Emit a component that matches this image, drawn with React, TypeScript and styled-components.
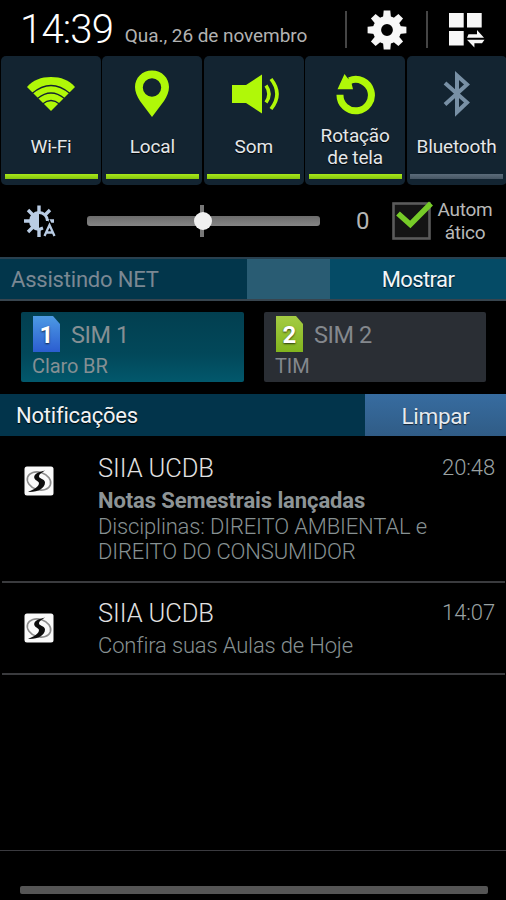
import React from "react";
import styled, { createGlobalStyle } from "styled-components";

const GlobalStyle = createGlobalStyle`
  *, *::before, *::after { box-sizing: border-box; }
  html, body { margin: 0; padding: 0; background: #000; }
  body { font-family: Roboto, "Liberation Sans", sans-serif; }
  svg { display: block; flex: none; }
`;

const LIME = "#b0f808";

const Screen = styled.main`
  width: 506px;
  height: 900px;
  overflow: hidden;
  background: #000;
  display: flex;
  flex-direction: column;
`;

const Header = styled.header`
  height: 56px;
  flex: none;
  display: flex;
  align-items: flex-start;
  padding-left: 20px;
`;

const Clock = styled.time`
  width: 105px;
  font-size: 40px;
  font-weight: 300;
  line-height: 60px;
  letter-spacing: -0.8px;
  color: #fff;
  white-space: nowrap;
`;

const DateText = styled.span`
  width: 221px;
  padding-top: 5px;
  font-size: 19px;
  line-height: 61px;
  letter-spacing: -0.06px;
  color: #b2b2b2;
  white-space: nowrap;
`;

const HeaderDivider = styled.i`
  width: 2px;
  height: 37px;
  margin: 11px 0 0 0;
  background: #454545;
`;

const HeaderButton = styled.button<{ $width: number; $top: number }>`
  width: ${(p) => p.$width}px;
  padding: ${(p) => p.$top}px 0 0;
  border: 0;
  background: none;
  display: flex;
  justify-content: center;
`;

const Tiles = styled.nav`
  height: 129px;
  flex: none;
  padding-left: 1px;
  display: grid;
  grid-template-columns: repeat(5, 100px);
  column-gap: 1.4px;
`;

const Tile = styled.button`
  min-width: 0;
  padding: 0 0 5px;
  border: 0;
  border-radius: 5px;
  background: #132431;
  font-family: inherit;
  display: flex;
  flex-direction: column;
  align-items: center;
`;

const TileIcon = styled.span`
  height: 69px;
  padding-top: 6px;
  flex: none;
  display: flex;
  align-items: center;
`;

const TileLabel = styled.span`
  height: 44px;
  flex: none;
  margin-bottom: 5px;
  display: flex;
  align-items: center;
  text-align: center;
  white-space: pre;
  font-size: 19px;
  line-height: 22px;
  letter-spacing: -0.15px;
  color: #e4e7ea;
  text-shadow: 0 1px 1px #000;
`;

const TileIndicator = styled.i<{ $on: boolean }>`
  width: 93px;
  height: 5px;
  flex: none;
  background: ${(p) => (p.$on ? "linear-gradient(#a8e818, #86c410)" : "linear-gradient(#5c6c7a, #465563)")};
`;

const Brightness = styled.section`
  height: 72px;
  flex: none;
  display: flex;
  align-items: center;
  padding-left: 23px;
`;

const Slider = styled.div`
  width: 233px;
  height: 32px;
  margin-left: 31px;
  display: grid;
  place-items: center;

  > * { grid-area: 1 / 1; }
`;

const Track = styled.i`
  width: 100%;
  height: 10px;
  border-radius: 3px;
  background: linear-gradient(#6c6c6c, #858585);
`;

const CenterTick = styled.i`
  width: 4px;
  height: 32px;
  margin-right: 3px;
  background: #777;
`;

const Knob = styled.i`
  width: 18px;
  height: 18px;
  margin-right: 1px;
  border-radius: 50%;
  background: #f0f0f0;
`;

const Level = styled.span`
  width: 72px;
  padding-left: 36px;
  font-size: 24px;
  line-height: 28px;
  color: #b5b5b5;
`;

const CheckLabel = styled.span`
  margin-left: 1px;
  padding-top: 1px;
  width: 60px;
  text-align: center;
  font-size: 19px;
  line-height: 22.5px;
  letter-spacing: -0.3px;
  color: #b8b8b8;
`;

const PlayBar = styled.section`
  height: 44px;
  flex: none;
  border-top: 2px solid #29404f;
  border-bottom: 2px solid #38454f;
  display: grid;
  grid-template-columns: 247px 83px 1fr;
  grid-template-rows: 40px;
`;

const PlayTitle = styled.span`
  padding-left: 11px;
  background: #02364b;
  font-size: 22px;
  line-height: 42px;
  letter-spacing: -0.2px;
  color: #7b8893;
`;

const PlayProgress = styled.span`
  background: #295c73;
`;

const ShowButton = styled.button`
  padding: 2px 0 0;
  border: 0;
  background: #054b66;
  font-family: inherit;
  font-size: 22px;
  line-height: 38px;
  letter-spacing: -0.6px;
  color: #f2f6f8;
  text-shadow: 0 1px 1px #012;
`;

const Sims = styled.section`
  height: 93px;
  flex: none;
  padding: 11px 21px 12px;
  display: grid;
  grid-template-columns: 223px 222px;
  column-gap: 20px;
`;

const SimCard = styled.button<{ $active: boolean }>`
  padding: 4px 0 0 12px;
  border: 0;
  border-radius: 2px;
  background: ${(p) => (p.$active ? "linear-gradient(#023f50, #02485a 60%, #02586c)" : "#2a2e34")};
  color: ${(p) => (p.$active ? "#858f93" : "#84888d")};
  font-family: inherit;
  text-align: left;
  display: flex;
  flex-direction: column;
`;

const SimTop = styled.span`
  height: 36px;
  display: flex;
  align-items: flex-start;
  gap: 11px;
`;

const SimName = styled.span`
  font-size: 23.5px;
  line-height: 38px;
  letter-spacing: -0.4px;
`;

const SimOperator = styled.span`
  margin-left: -1px;
  font-size: 20px;
  line-height: 29px;
  letter-spacing: -0.1px;
`;

const NotificationBar = styled.section`
  height: 42px;
  flex: none;
  display: grid;
  grid-template-columns: 365px 1fr;
  grid-template-rows: 42px;
`;

const BarTitle = styled.h1`
  margin: 0;
  padding-left: 16px;
  background: #02344b;
  font-size: 22px;
  font-weight: 400;
  line-height: 44px;
  letter-spacing: -0.2px;
  color: #f0f3f5;
  text-shadow: 0 1px 1px #000;
`;

const ClearButton = styled.button`
  padding: 3px 0 0;
  border: 0;
  background: linear-gradient(#376ca0, #305c86);
  font-family: inherit;
  font-size: 22.5px;
  line-height: 39px;
  letter-spacing: -0.3px;
  color: #e6ebf0;
  text-shadow: 0 1px 1px #123;
`;

const Notification = styled.article<{ $height: number; $top: number }>`
  height: ${(p) => p.$height}px;
  flex: none;
  margin: 0 1px 0 2px;
  padding: ${(p) => p.$top}px 10px 0 22px;
  border-bottom: 2px solid #3a3b3e;
  display: grid;
  grid-template-columns: 74px 1fr auto;
  align-items: start;
`;

const AppBadge = styled.span<{ $top: number }>`
  padding-top: ${(p) => p.$top}px;
`;

const NotificationTitle = styled.h2`
  margin: 0;
  font-size: 25.5px;
  font-weight: 300;
  line-height: 34px;
  letter-spacing: -0.1px;
  color: #e2e2e2;
`;

const NotificationTime = styled.time`
  font-size: 22px;
  font-weight: 300;
  line-height: 34px;
  letter-spacing: -0.1px;
  color: #9aa2a3;
`;

const Line = styled.p<{ $strong?: boolean }>`
  margin: 0;
  margin-right: -60px;
  font-size: 22px;
  font-weight: ${(p) => (p.$strong ? 700 : 300)};
  line-height: 25.5px;
  letter-spacing: ${(p) => (p.$strong ? "-0.1px" : "-0.15px")};
  white-space: nowrap;
  color: ${(p) => (p.$strong ? "#8d9496" : "#879192")};
`;

const Lines = styled.div<{ $top: number }>`
  padding-top: ${(p) => p.$top}px;
`;

const EmptyArea = styled.div`
  flex: 1;
  border-bottom: 1px solid #3a3a3f;
`;

const PullArea = styled.footer`
  height: 49px;
  flex: none;
  padding: 35px 18px 0 20px;
`;

const PullHandle = styled.i`
  display: block;
  height: 8px;
  border-radius: 2px;
  background: #555;
`;

const Gear = () => (
  <svg width="40" height="40" viewBox="-20 -20 40 40" fill="#f7f7f7">
    {[0, 45, 90, 135, 180, 225, 270, 315].map((a) => (
      <path key={a} d="M-4-12L-3.3-19.4H3.3L4-12Z" transform={`rotate(${a})`} />
    ))}
    <circle r="10" fill="none" stroke="#f7f7f7" strokeWidth="8.2" />
  </svg>
);

const QuickPanel = () => (
  <svg width="36" height="35" viewBox="0 0 36 35" fill="#f7f7f7">
    <path d="M0 0h14.7v14.5H0zM18 0h14.7v14.5H18zM0 18h14.7v14.5H0z" />
    <path d="M18 24.8L19.5 21.3H28V17L35 24.8ZM18 26.7H35.5L33 30.3H25.4V34.5Z" />
  </svg>
);

const WifiIcon = () => (
  <svg width="48" height="36" viewBox="0 0 48 36">
    <path d="M24 35L0 11C6 4 14 1 24 1s18 3 24 10Z" fill={LIME} />
    <g fill="none" stroke="#132431" strokeWidth="1.3">
      <path d="M5 17.500q19-16 38 0M10.500 22.500q13.500-11 27 0M15.500 28q8.500-7 17 0" />
    </g>
  </svg>
);

const PinIcon = () => (
  <svg width="36" height="48" viewBox="0 0 36 48">
    <path
      fillRule="evenodd"
      fill={LIME}
      d="M18 .5C8 .5 1 8 1 17c0 5 2 9 5 14l12 16 12-16c3-5 5-9 5-14C35 8 28 .5 18 .5ZM18 8.300a9.200 9.200 0 1 1 0 18.400 9.200 9.200 0 0 1 0-18.400Z"
    />
  </svg>
);

const SoundIcon = () => (
  <svg width="54" height="40" viewBox="-4 0 54 40">
    <path d="M1 11H15L31 .5V39.500L15 29H1Z" fill={LIME} />
    <path d="M35 11.500Q41 20 35 28.500M40 5Q52 20 40 35" fill="none" stroke={LIME} strokeWidth="3.600" />
  </svg>
);

const RotateIcon = () => (
  <svg width="40" height="42" viewBox="0 0 40 42">
    <path d="M14.500 7.700A15.700 15.700 0 1 1 5 21.800" fill="none" stroke={LIME} strokeWidth="7" />
    <path d="M9.500 1L12.500 5L16 8L18 16.300H2.500Z" fill={LIME} />
  </svg>
);

const BluetoothIcon = () => (
  <svg width="28" height="48" viewBox="0 0 28 48" fill="none" stroke="#7890a5" strokeWidth="4">
    <path d="M2 13L24 32.500 14 42V5.500L24 14.500 2 34.500" />
  </svg>
);

const AutoBrightness = () => (
  <svg width="33" height="33" viewBox="0 0 33 33">
    <g stroke="#b9cce4" strokeWidth="3.400">
      <path d="M16 .5V7M16 25v7M1 16h6M25 16h6M5 5l5 5M27 5l-5 5M5 27l5-5" />
    </g>
    <path d="M16 6A10 10 0 0 0 16 26Z" fill="#b9cce4" />
    <path d="M16 7.500A8.500 8.500 0 0 1 24.500 16M16 24.500L20 23" fill="none" stroke="#b9cce4" strokeWidth="3" />
    <path d="M21.500 31L26.500 20L31.500 31M23 27.500h7" fill="none" stroke="#000" strokeWidth="5" />
    <path d="M21.500 31L26.500 20L31.500 31M23 27.500h7" fill="none" stroke="#b9cce4" strokeWidth="2.300" />
  </svg>
);

const Checkbox = () => (
  <svg width="42" height="40" viewBox="0 0 42 40">
    <rect x="1.500" y="2.500" width="36" height="35" fill="#141414" stroke="#5b5b5b" strokeWidth="2.600" />
    <path d="M6 12.500L18.300 23.500L39 2.500" fill="none" stroke="#76cb28" strokeWidth="5.600" />
  </svg>
);

const SimChip = styled.span<{ $color: string }>`
  width: 27px;
  height: 36px;
  background: ${(p) => p.$color};
  clip-path: polygon(0 0, 20px 0, 100% 8px, 100% 100%, 0 100%);
  color: #fff;
  font-size: 24px;
  font-weight: 700;
  line-height: 38px;
  text-align: center;
  text-shadow: 0 1px 2px rgba(0, 0, 0, 0.7);
`;

const AppLogo = () => (
  <svg width="30" height="30" viewBox="0 0 30 30">
    <rect x=".5" y=".5" width="29" height="29" rx="2.500" fill="#fafafa" />
    <ellipse cx="15" cy="15" rx="12" ry="8.700" transform="rotate(18 15 15)" fill="none" stroke="#8d8d8d" strokeWidth="1.600" />
    <path d="M21 4.500C13 6 9 9 10.500 12.500C12 15.500 16.500 15 14.500 19C13 22 8 24 4 26C14 26.500 21 22 21 16.500C21 12.500 14.500 13 15 10C15.300 8 18 6.500 21 4.500Z" fill="#0c0c0c" />
  </svg>
);

const tiles = [
  { label: "Wi-Fi", icon: <WifiIcon />, on: true },
  { label: "Local", icon: <PinIcon />, on: true },
  { label: "Som", icon: <SoundIcon />, on: true },
  { label: "Rotação\nde tela", icon: <RotateIcon />, on: true },
  { label: "Bluetooth", icon: <BluetoothIcon />, on: false },
];

const sims = [
  { slot: "1", name: "SIM 1", operator: "Claro BR", color: "linear-gradient(#4d9ae4, #2b5dd0)", active: true },
  { slot: "2", name: "SIM 2", operator: "TIM", color: "linear-gradient(#a5cc43, #82b51e)", active: false },
];

const notifications = [
  {
    title: "SIIA UCDB",
    time: "20:48",
    height: 147,
    top: 15,
    gap: 3,
    strong: "Notas Semestrais lançadas",
    lines: ["Disciplinas: DIREITO AMBIENTAL e", "DIREITO DO CONSUMIDOR"],
  },
  { title: "SIIA UCDB", time: "14:07", height: 92, top: 13, gap: 3, lines: ["Confira suas Aulas de Hoje"] },
];

export default function App() {
  return (
    <Screen>
      <GlobalStyle />
      <Header>
        <Clock>14:39</Clock>
        <DateText>Qua., 26 de novembro</DateText>
        <HeaderDivider />
        <HeaderButton $width={79} $top={10} aria-label="Configurações">
          <Gear />
        </HeaderButton>
        <HeaderDivider />
        <HeaderButton $width={78} $top={13} aria-label="Painel rápido">
          <QuickPanel />
        </HeaderButton>
      </Header>

      <Tiles>
        {tiles.map((t) => (
          <Tile key={t.label}>
            <TileIcon>{t.icon}</TileIcon>
            <TileLabel>{t.label}</TileLabel>
            <TileIndicator $on={t.on} />
          </Tile>
        ))}
      </Tiles>

      <Brightness>
        <AutoBrightness />
        <Slider>
          <Track />
          <CenterTick />
          <Knob />
        </Slider>
        <Level>0</Level>
        <Checkbox />
        <CheckLabel>
          Autom
          <br />
          ático
        </CheckLabel>
      </Brightness>

      <PlayBar>
        <PlayTitle>Assistindo NET</PlayTitle>
        <PlayProgress />
        <ShowButton>Mostrar</ShowButton>
      </PlayBar>

      <Sims>
        {sims.map((s) => (
          <SimCard key={s.slot} $active={s.active}>
            <SimTop>
              <SimChip $color={s.color}>{s.slot}</SimChip>
              <SimName>{s.name}</SimName>
            </SimTop>
            <SimOperator>{s.operator}</SimOperator>
          </SimCard>
        ))}
      </Sims>

      <NotificationBar>
        <BarTitle>Notificações</BarTitle>
        <ClearButton>Limpar</ClearButton>
      </NotificationBar>

      {notifications.map((n) => (
        <Notification key={n.time} $height={n.height} $top={n.top}>
          <AppBadge $top={30 - n.top}>
            <AppLogo />
          </AppBadge>
          <div>
            <NotificationTitle>{n.title}</NotificationTitle>
            <Lines $top={n.gap}>
              {n.strong && <Line $strong>{n.strong}</Line>}
              {n.lines.map((l) => (
                <Line key={l}>{l}</Line>
              ))}
            </Lines>
          </div>
          <NotificationTime>{n.time}</NotificationTime>
        </Notification>
      ))}

      <EmptyArea />
      <PullArea>
        <PullHandle />
      </PullArea>
    </Screen>
  );
}
